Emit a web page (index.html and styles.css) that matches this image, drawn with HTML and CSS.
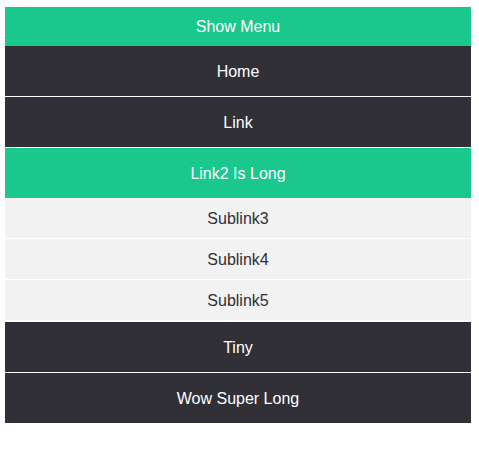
FILE: index.html
```html
<!DOCTYPE html>
<html>
<head>
<meta charset="utf-8">
<link rel="stylesheet" href="styles.css">
</head>
<body>
<nav class="menu">
  <div class="toggle">Show Menu</div>
  <ul class="items">
    <li class="item">Home</li>
    <li class="item">Link</li>
    <li class="item active">Link2 Is Long</li>
    <li class="sub">Sublink3</li>
    <li class="sub">Sublink4</li>
    <li class="sub last">Sublink5</li>
    <li class="item">Tiny</li>
    <li class="item">Wow Super Long</li>
  </ul>
</nav>
</body>
</html>
```
FILE: styles.css
```css
html, body {
  margin: 0;
  padding: 0;
  background: #ffffff;
}
body {
  padding: 7px 8px 0 5px;
  font-family: "Liberation Sans", Arial, Helvetica, sans-serif;
  font-size: 16px;
}
.menu {
  display: flex;
  flex-direction: column;
}
.toggle {
  height: 39px;
  display: flex;
  align-items: center;
  justify-content: center;
  background: #1ac78c;
  color: #ffffff;
}
.items {
  list-style: none;
  margin: 0;
  padding: 0;
  display: flex;
  flex-direction: column;
}
.item {
  height: 50px;
  box-sizing: border-box;
  padding-top: 1px;
  display: flex;
  align-items: center;
  justify-content: center;
  background: #303036;
  color: #ffffff;
}
.item + .item,
.sub + .item {
  border-top: 1px solid #ffffff;
  height: 51px;
}
.item.active {
  background: #1ac78c;
}
.sub {
  height: 40px;
  box-sizing: border-box;
  padding-top: 2px;
  display: flex;
  align-items: center;
  justify-content: center;
  background: #f2f2f2;
  color: #303036;
}
.sub + .sub {
  border-top: 1px solid #ffffff;
  height: 41px;
}
.sub.last {
  border-bottom: 1px solid #ffffff;
  height: 42px;
}
```
